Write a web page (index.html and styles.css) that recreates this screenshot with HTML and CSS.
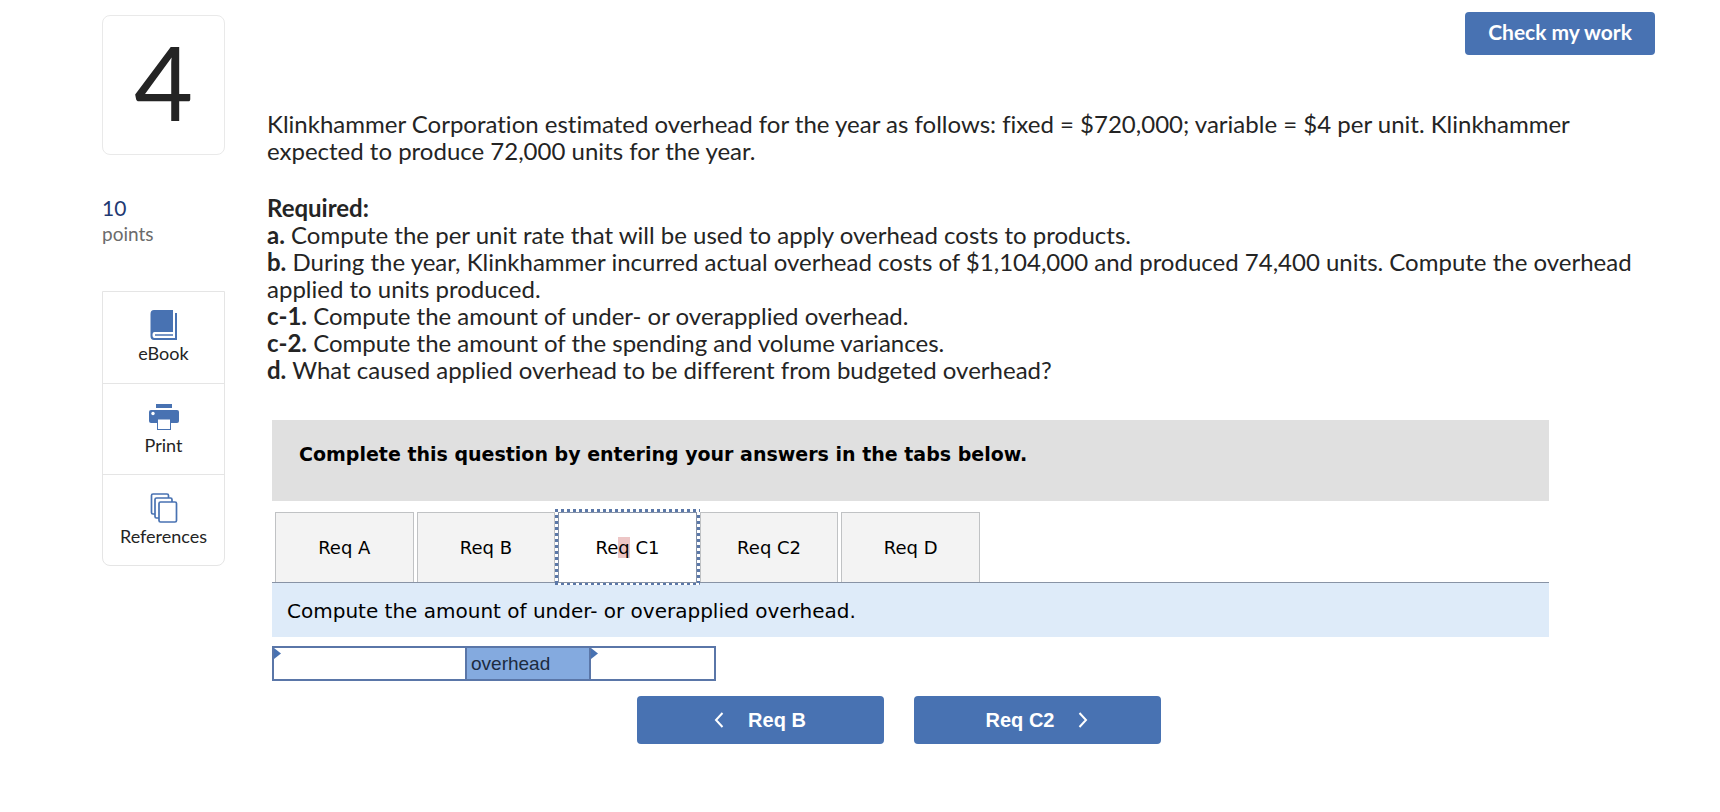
FILE: index.html
```
<!DOCTYPE html>
<html lang="en">

<head>
    <meta charset="UTF-8">
    <meta name="viewport" content="width=device-width, initial-scale=1.0">
    <title>Question 4</title>
    <link rel="stylesheet" href="styles.css">
</head>

<body>
    <div class="page">
        <aside class="sidebar">
            <div class="questionNumber">4</div>
            <div class="points">
                <div class="pointsValue">10</div>
                <div class="pointsLabel">points</div>
            </div>
            <nav class="tools">
                <a class="tool" href="#ebook">
                    <svg class="toolIcon" width="30" height="30" viewBox="0 0 30 30">
                        <path fill="#4872b2" d="M5 0H24V22H5.500Q3.500 22 3.500 25Q3.500 28 5.500 28H26V3H28V30H5Q1.500 30 1.500 26V4Q1.500 0 5 0Z" />
                        <path fill="none" stroke="#4872b2" stroke-width="1.500" d="M24 25H6" />
                    </svg>
                    eBook
                </a>
                <a class="tool" href="#print">
                    <svg class="toolIcon" width="30" height="30" viewBox="0 0 30 30">
                        <rect fill="#4872b2" x="7" y="2" width="16" height="4" />
                        <rect fill="#4872b2" x="0" y="8" width="30" height="13" rx="2" />
                        <circle fill="#fff" cx="4" cy="11.500" r="1.700" />
                        <rect fill="#fff" stroke="#4872b2" x="8.500" y="17" width="13" height="10.500" />
                    </svg>
                    Print
                </a>
                <a class="tool" href="#references">
                    <svg class="toolIcon" width="30" height="30" viewBox="0 0 30 30">
                        <g fill="#fff" stroke="#4872b2" stroke-width="1.700">
                            <rect x="2.500" y="1" width="17" height="20" rx="1.500" />
                            <rect x="6" y="5" width="17" height="20" rx="1.500" />
                            <rect x="10" y="9" width="17.500" height="20" rx="1.500" />
                        </g>
                    </svg>
                    References
                </a>
            </nav>
        </aside>
        <main class="content">
            <button class="btn checkBtn">Check my work</button>
            <section class="problem">
                <p>Klinkhammer Corporation estimated overhead for the year as follows: fixed = $720,000; variable = $4 per unit. Klinkhammer expected to produce 72,000 units for the year.</p>
                <p><b>Required:</b><br>
                    <b>a.</b> Compute the per unit rate that will be used to apply overhead costs to products.<br>
                    <b>b.</b> During the year, Klinkhammer incurred actual overhead costs of $1,104,000 and produced 74,400 units. Compute the overhead applied to units produced.<br>
                    <b>c-1.</b> Compute the amount of under- or overapplied overhead.<br>
                    <b>c-2.</b> Compute the amount of the spending and volume variances.<br>
                    <b>d.</b> What caused applied overhead to be different from budgeted overhead?</p>
            </section>
            <section class="answer">
                <div class="banner">Complete this question by entering your answers in the tabs below.</div>
                <div class="tabs" role="tablist">
                    <button class="tab" role="tab">Req A</button>
                    <button class="tab" role="tab">Req B</button>
                    <button class="tab active" role="tab" aria-selected="true"><span>Re<span class="mark">q</span> C1</span></button>
                    <button class="tab" role="tab">Req C2</button>
                    <button class="tab" role="tab">Req D</button>
                </div>
                <div class="instruction">Compute the amount of under- or overapplied overhead.</div>
                <div class="entryRow">
                    <div class="entry entryType"><input type="text" aria-label="Under- or overapplied"></div>
                    <div class="entryLabel" id="overheadLabel">overhead</div>
                    <div class="entry entryAmount"><input type="text" aria-labelledby="overheadLabel"></div>
                </div>
                <div class="navButtons">
                    <button class="btn navBtn">
                        <svg width="10" height="16" viewBox="0 0 10 16"><path fill="none" stroke="#fff" stroke-width="2" d="M8.500 1L2 8L8.500 15" /></svg>
                        Req B
                    </button>
                    <button class="btn navBtn">
                        Req C2
                        <svg width="10" height="16" viewBox="0 0 10 16"><path fill="none" stroke="#fff" stroke-width="2" d="M1.500 1L8 8L1.500 15" /></svg>
                    </button>
                </div>
            </section>
        </main>
    </div>
</body>

</html>
```
FILE: styles.css
```
* {
    box-sizing: border-box;
}

body {
    margin: 0;
    background-color: white;
    color: #242424;
    font-family: Lato, sans-serif;
    font-variant-ligatures: none;
}

.page {
    display: grid;
    grid-template-columns: 123px 1fr;
    gap: 42px;
    padding: 12px 65px 0 102px;
}

.sidebar {
    padding-top: 3px;
}

.questionNumber {
    height: 140px;
    border: 1px solid #e9e9e9;
    border-radius: 8px;
    font-size: 102px;
    line-height: 132px;
    text-align: center;
}

.points {
    margin: 39px 0 45px;
}

.pointsValue {
    color: #1f3a73;
    font-size: 21px;
    line-height: 27px;
}

.pointsLabel {
    color: #6b6b6b;
    font-size: 19px;
    line-height: 25px;
}

.tools {
    border: 1px solid #e5e5e5;
    border-radius: 0 0 8px 8px;
}

.tool {
    display: flex;
    flex-direction: column;
    align-items: center;
    gap: 1px;
    height: 91px;
    padding-top: 18px;
    color: #242424;
    font-size: 18px;
    line-height: 24px;
    text-decoration: none;
}

.tool + .tool {
    border-top: 1px solid #e5e5e5;
}

.content {
    display: flex;
    flex-direction: column;
}

.btn {
    border: none;
    border-radius: 4px;
    background-color: #4872b2;
    color: white;
    font-weight: bold;
    font-size: 20px;
    cursor: pointer;
}

.checkBtn {
    align-self: flex-end;
    width: 190px;
    height: 43px;
    padding: 0 0 4px;
    font-family: Lato, sans-serif;
    font-size: 21px;
}

.problem {
    margin-top: 55px;
    font-size: 24px;
    line-height: 27px;
}

.problem p {
    margin: 0 0 30px;
}

.answer {
    margin: 7px 106px 0 5px;
    color: black;
    font-family: Verdana, "DejaVu Sans", sans-serif;
}

.banner {
    padding: 21px 27px 33px;
    background-color: #e0e0e0;
    font-weight: bold;
    font-size: 19px;
    line-height: 27px;
}

.tabs {
    display: grid;
    grid-template-columns: repeat(5, 1fr);
    gap: 3px;
    max-width: 708px;
    margin-top: 11px;
    padding-left: 3px;
}

.tab {
    position: relative;
    height: 70px;
    padding: 0;
    border: 1px solid #c0c2c4;
    border-bottom: none;
    background-color: #f3f3f3;
    color: black;
    font-family: inherit;
    font-size: 18px;
    cursor: pointer;
}

.active {
    border-color: #8592a8;
    background-color: white;
}

/* square dotted focus ring */
.active::after {
    content: "";
    position: absolute;
    inset: -4px -4px -3px;
    background:
        repeating-linear-gradient(90deg, #5b78a8 0 3px, white 3px 6px) top / 100% 3px no-repeat,
        repeating-linear-gradient(90deg, #5b78a8 0 3px, white 3px 6px) bottom / 100% 2px no-repeat,
        repeating-linear-gradient(#5b78a8 0 3px, white 3px 6px) left / 3px 100% no-repeat,
        repeating-linear-gradient(#5b78a8 0 3px, white 3px 6px) right / 3px 100% no-repeat;
}

.mark {
    background-color: #edc6c6;
}

.instruction {
    padding: 15px 15px 13px;
    border-top: 1px solid #8893a5;
    background-color: #deebf9;
    font-size: 20px;
    line-height: 26px;
}

.entryRow {
    display: flex;
    width: 444px;
    height: 35px;
    margin-top: 9px;
    border: 2px solid #5a76a8;
    color: #1c2b40;
    font-family: "Liberation Sans", Arial, sans-serif;
    font-size: 19px;
}

.entry {
    position: relative;
}

.entry::before {
    content: "";
    position: absolute;
    width: 7px;
    height: 11px;
    background-color: #4872b2;
    clip-path: polygon(0 0, 100% 50%, 0 100%);
}

.entry input {
    width: 100%;
    height: 100%;
    padding: 0 8px;
    border: none;
    font: inherit;
}

.entryType {
    width: 191px;
}

.entryLabel {
    width: 126px;
    padding-left: 4px;
    border: solid #5a76a8;
    border-width: 0 2px;
    background-color: #84aadf;
    line-height: 31px;
}

.entryAmount {
    flex: 1;
}

.navButtons {
    display: flex;
    justify-content: center;
    gap: 30px;
    margin-top: 15px;
    padding-right: 24px;
}

.navBtn {
    display: flex;
    align-items: center;
    justify-content: center;
    gap: 24px;
    width: 247px;
    height: 48px;
    font-family: "Liberation Sans", Arial, sans-serif;
}
```
